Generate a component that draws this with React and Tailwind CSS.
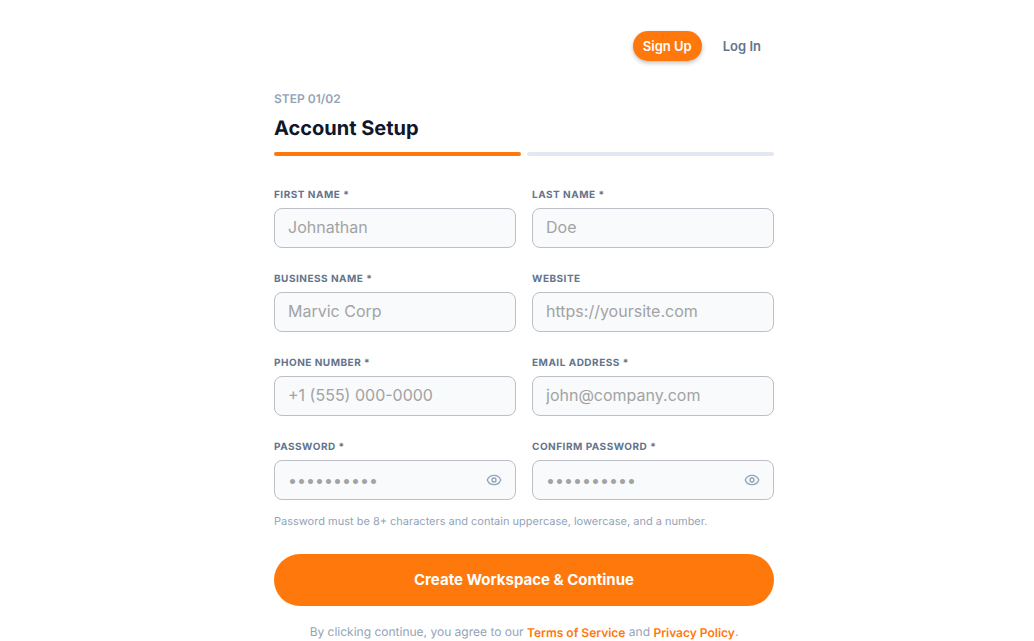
import React from "react";
import { Eye } from "lucide-react";

const fields = [
  { label: "FIRST NAME *", placeholder: "Johnathan" },
  { label: "LAST NAME *", placeholder: "Doe" },
  { label: "BUSINESS NAME *", placeholder: "Marvic Corp" },
  { label: "WEBSITE", placeholder: "https://yoursite.com" },
  { label: "PHONE NUMBER *", placeholder: "+1 (555) 000-0000" },
  { label: "EMAIL ADDRESS *", placeholder: "john@company.com" },
  { label: "PASSWORD *", placeholder: "••••••••••", secret: true },
  { label: "CONFIRM PASSWORD *", placeholder: "••••••••••", secret: true },
];

const Field = ({ label, placeholder, secret }) => (
  <div>
    <label className="block h-[16px] mb-[6px] text-[10px] leading-[18px] font-bold tracking-[0.5px] text-[#64748b]">
      {label}
    </label>
    <div className="relative">
      <input
        type={secret ? "password" : "text"}
        placeholder={placeholder}
        className={`block w-full h-[40px] px-[13px] rounded-[8px] border border-[#bcbfc6] bg-[#f8fafc] text-[16px] outline-none placeholder:text-[#a3a3a3] ${secret ? "" : "pb-[2px]"}`}
      />
      {secret && (
        <Eye className="absolute right-[14px] top-[12px] w-[16px] h-[16px] text-[#94a3b8]" strokeWidth={2} />
      )}
    </div>
  </div>
);

export default function App() {
  return (
    <div className="min-h-[641px] bg-white flex justify-center pl-[14px] font-['Inter',sans-serif] [text-rendering:geometricPrecision]">
      <div className="w-[500px]">
        {/* Top nav */}
        <div className="flex items-center justify-end gap-[21px] pt-[31px] pr-[13px]">
          <button className="h-[30px] w-[69px] pt-[2px] rounded-full bg-[#ff780b] text-white text-[13px] font-semibold shadow-[0_2px_4px_rgba(0,0,0,0.25)]">
            Sign Up
          </button>
          <button className="pt-[2px] text-[13px] font-semibold text-[#64748b]">Log In</button>
        </div>

        {/* Step header */}
        <p className="mt-[30px] text-[12px] leading-[16px] font-semibold text-[#94a3b8]">STEP 01/02</p>
        <h1 className="mt-[7px] text-[20px] leading-[28px] font-bold text-[#0f172a]">Account Setup</h1>
        <div className="mt-[10px] flex gap-[6px]">
          <div className="flex-1 h-[4px] rounded-full bg-[#ff780b]" />
          <div className="flex-1 h-[4px] rounded-full bg-[#e2e8f0]" />
        </div>

        {/* Form */}
        <div className="mt-[30px] grid grid-cols-2 gap-x-[16px] gap-y-[22px]">
          {fields.map((f) => (
            <Field key={f.label} {...f} />
          ))}
        </div>

        <p className="mt-[13px] text-[11px] leading-[16px] text-[#94a3b8]">
          Password must be 8+ characters and contain uppercase, lowercase, and a number.
        </p>

        <button className="mt-[25px] w-full h-[52px] rounded-full bg-[#ff780b] text-white text-[15px] font-bold">
          Create Workspace &amp; Continue
        </button>

        <p className="mt-[17px] text-center text-[12px] leading-[18px] text-[#94a3b8]">
          By clicking continue, you agree to our{" "}
          <a className="align-[-1px] font-semibold text-[#ff780b]">Terms of Service</a> and{" "}
          <a className="align-[-1px] font-semibold text-[#ff780b]">Privacy Policy</a>.
        </p>
      </div>
    </div>
  );
}
